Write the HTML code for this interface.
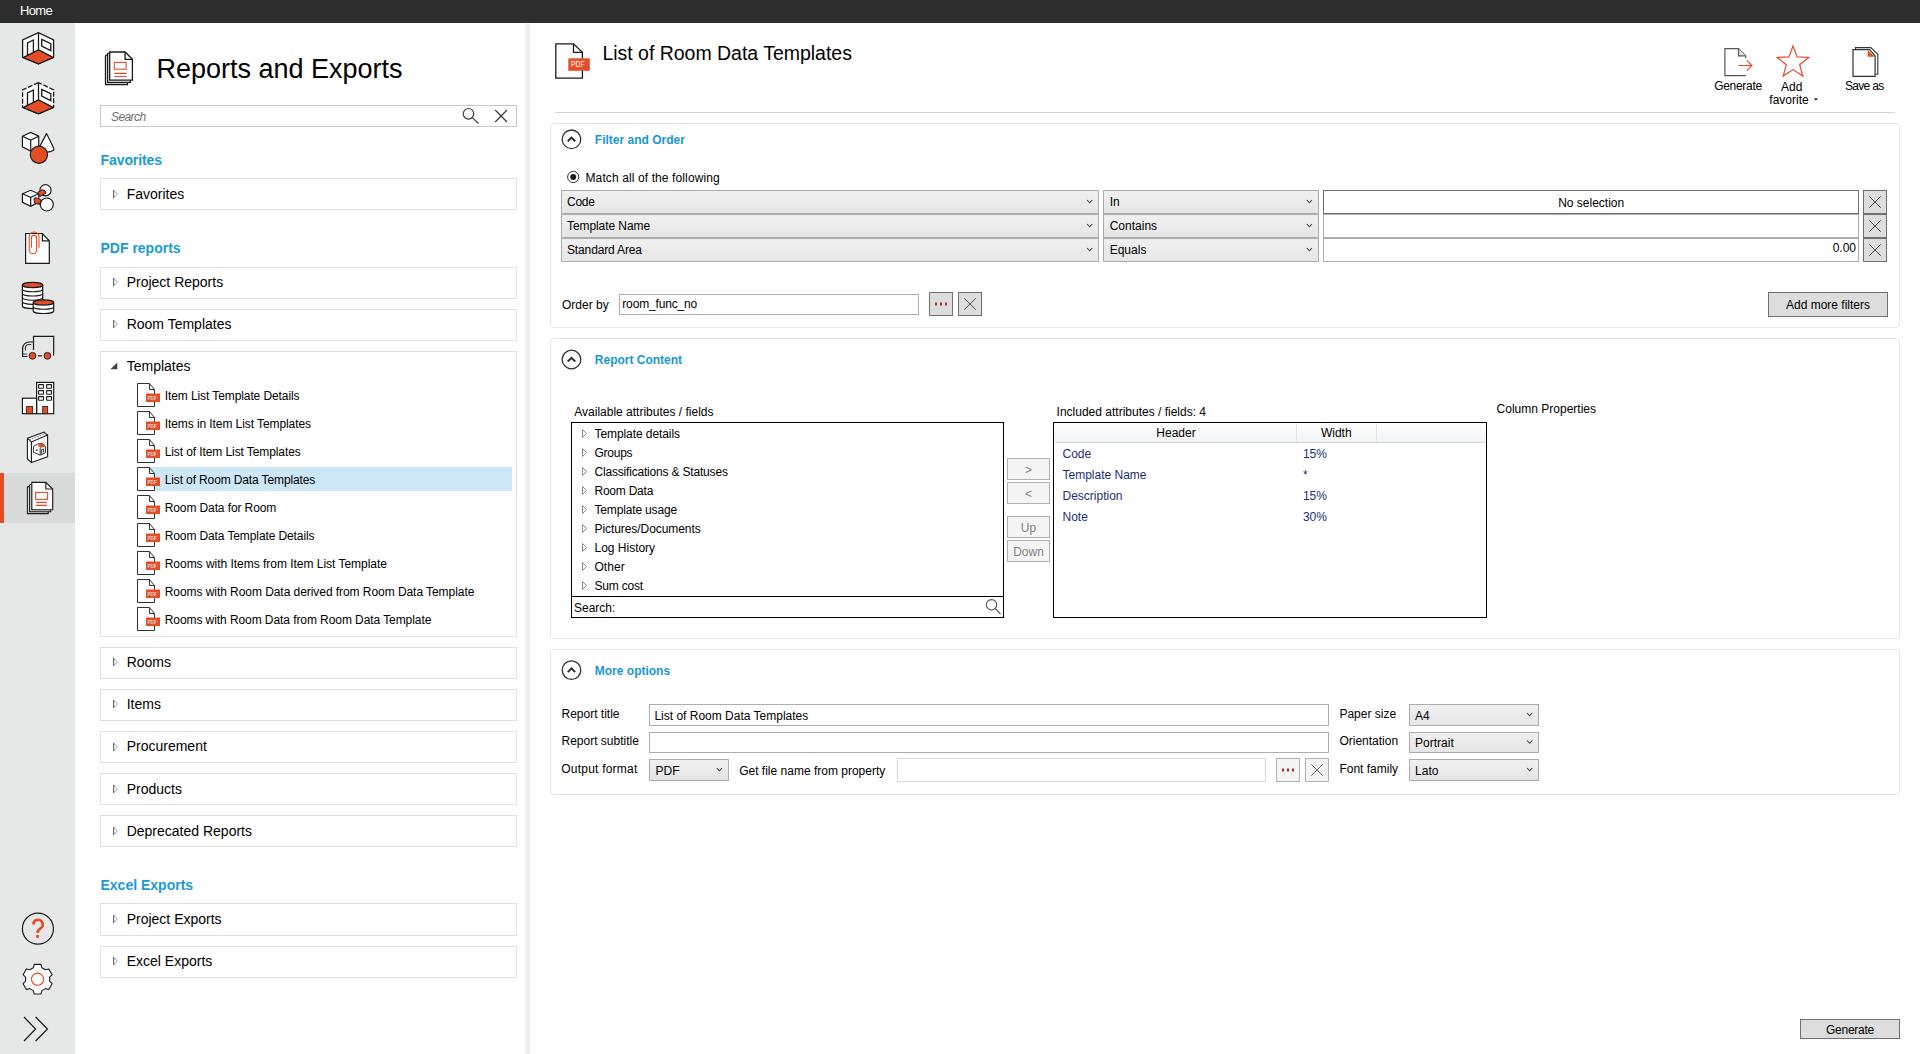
<!DOCTYPE html><html><head><meta charset="utf-8"><style>
html,body{margin:0;padding:0;width:1920px;height:1054px;overflow:hidden;background:#fff;font-family:"Liberation Sans",sans-serif;}
.t{position:absolute;white-space:pre;}
.b{position:absolute;box-sizing:border-box;}
svg{position:absolute;overflow:visible;}
</style></head><body>
<div class="b" style="left:0px;top:0px;width:1920px;height:23px;background:#2d2d2d;"></div>
<div class="t" style="left:20px;top:3.995px;font-size:13px;line-height:13px;color:#fff;font-weight:normal;letter-spacing:-0.670px;">Home</div>
<div class="b" style="left:0px;top:23px;width:75px;height:1031px;background:#e6e7e7;"></div>
<div class="b" style="left:0px;top:473px;width:75px;height:50px;background:#d9dada;"></div>
<div class="b" style="left:0px;top:473px;width:4px;height:50px;background:#e44d26;"></div>
<div class="b" style="left:525px;top:23px;width:5px;height:1031px;background:#f0f0f0;"></div>
<div class="t" style="left:156.5px;top:56.145px;font-size:27px;line-height:27px;color:#000;font-weight:normal;letter-spacing:-0.007px;">Reports and Exports</div>
<div class="b" style="left:100px;top:105px;width:417px;height:22px;background:#fff;border:1px solid #c9c9c9;"></div>
<div class="t" style="left:111px;top:110.842px;font-size:12px;line-height:12px;color:#6e6e6e;font-weight:normal;font-style:italic;letter-spacing:-0.587px;">Search</div>
<svg style="left:0;top:0" width="1920" height="1054"><g fill="none" stroke="#3c3c3c" stroke-width="1.2"><circle cx="468.5" cy="113.8" r="5.3"/><line x1="472.3" y1="117.6" x2="478.5" y2="123.5"/><line x1="495.2" y1="110" x2="507" y2="122"/><line x1="507" y1="110" x2="495.2" y2="122"/></g></svg>
<div class="t" style="left:100.5px;top:153.149px;font-size:14px;line-height:14px;color:#1a9ad6;font-weight:bold;letter-spacing:-0.083px;">Favorites</div>
<div class="t" style="left:100.5px;top:241.149px;font-size:14px;line-height:14px;color:#1a9ad6;font-weight:bold;">PDF reports</div>
<div class="t" style="left:100.5px;top:878.149px;font-size:14px;line-height:14px;color:#1a9ad6;font-weight:bold;">Excel Exports</div>
<div class="b" style="left:100px;top:178px;width:417px;height:32px;background:#fff;border:1px solid #e2e2e2;"></div>
<div class="t" style="left:126.7px;top:187.149px;font-size:14px;line-height:14px;color:#000;font-weight:normal;">Favorites</div>
<svg style="left:0;top:0" width="1920" height="1054"><path d="M113.6 190.3 L117.5 194 L113.6 197.7 Z" fill="#fff" stroke="#a0a0a0" stroke-width="1"/><path d="M113.6 190 V198" stroke="#6a6a6a" stroke-width="1.1"/></svg>
<div class="b" style="left:100px;top:267px;width:417px;height:32px;background:#fff;border:1px solid #e2e2e2;"></div>
<div class="t" style="left:126.7px;top:275.149px;font-size:14px;line-height:14px;color:#000;font-weight:normal;">Project Reports</div>
<svg style="left:0;top:0" width="1920" height="1054"><path d="M113.6 278.3 L117.5 282 L113.6 285.7 Z" fill="#fff" stroke="#a0a0a0" stroke-width="1"/><path d="M113.6 278 V286" stroke="#6a6a6a" stroke-width="1.1"/></svg>
<div class="b" style="left:100px;top:309px;width:417px;height:32px;background:#fff;border:1px solid #e2e2e2;"></div>
<div class="t" style="left:126.7px;top:317.149px;font-size:14px;line-height:14px;color:#000;font-weight:normal;">Room Templates</div>
<svg style="left:0;top:0" width="1920" height="1054"><path d="M113.6 320.3 L117.5 324 L113.6 327.7 Z" fill="#fff" stroke="#a0a0a0" stroke-width="1"/><path d="M113.6 320 V328" stroke="#6a6a6a" stroke-width="1.1"/></svg>
<div class="b" style="left:100px;top:351px;width:417px;height:286px;background:#fff;border:1px solid #e2e2e2;"></div>
<div class="t" style="left:126.7px;top:359.149px;font-size:14px;line-height:14px;color:#000;font-weight:normal;">Templates</div>
<svg style="left:0;top:0" width="1920" height="1054"><path d="M117.3 362.6 L117.3 369.2 L110.4 369.2 Z" fill="#444"/></svg>
<div class="t" style="left:164.7px;top:389.842px;font-size:12px;line-height:12px;color:#000;font-weight:normal;letter-spacing:-0.091px;">Item List Template Details</div>
<svg style="left:0;top:0" width="1920" height="1054"><path d="M137.5 383.5 H149.5 L154.5 389.5 V406.5 H137.5 Z" fill="#fff" stroke="#333" stroke-width="1"/><path d="M149.5 383.5 V389.5 H154.5" fill="none" stroke="#333" stroke-width="1"/><rect x="146" y="393.5" width="14" height="8.5" fill="#e44d26"/><text x="147.4" y="399.8" font-size="5.6" textLength="9.4" lengthAdjust="spacingAndGlyphs" fill="#fff" font-family="Liberation Sans">PDF</text></svg>
<div class="t" style="left:164.7px;top:417.842px;font-size:12px;line-height:12px;color:#000;font-weight:normal;letter-spacing:-0.079px;">Items in Item List Templates</div>
<svg style="left:0;top:0" width="1920" height="1054"><path d="M137.5 411.5 H149.5 L154.5 417.5 V434.5 H137.5 Z" fill="#fff" stroke="#333" stroke-width="1"/><path d="M149.5 411.5 V417.5 H154.5" fill="none" stroke="#333" stroke-width="1"/><rect x="146" y="421.5" width="14" height="8.5" fill="#e44d26"/><text x="147.4" y="427.8" font-size="5.6" textLength="9.4" lengthAdjust="spacingAndGlyphs" fill="#fff" font-family="Liberation Sans">PDF</text></svg>
<div class="t" style="left:164.7px;top:445.842px;font-size:12px;line-height:12px;color:#000;font-weight:normal;letter-spacing:-0.093px;">List of Item List Templates</div>
<svg style="left:0;top:0" width="1920" height="1054"><path d="M137.5 439.5 H149.5 L154.5 445.5 V462.5 H137.5 Z" fill="#fff" stroke="#333" stroke-width="1"/><path d="M149.5 439.5 V445.5 H154.5" fill="none" stroke="#333" stroke-width="1"/><rect x="146" y="449.5" width="14" height="8.5" fill="#e44d26"/><text x="147.4" y="455.8" font-size="5.6" textLength="9.4" lengthAdjust="spacingAndGlyphs" fill="#fff" font-family="Liberation Sans">PDF</text></svg>
<div class="b" style="left:140px;top:467px;width:372px;height:24px;background:#cce7f5;"></div>
<div class="t" style="left:164.7px;top:473.842px;font-size:12px;line-height:12px;color:#000;font-weight:normal;letter-spacing:-0.124px;">List of Room Data Templates</div>
<svg style="left:0;top:0" width="1920" height="1054"><path d="M137.5 467.5 H149.5 L154.5 473.5 V490.5 H137.5 Z" fill="#fff" stroke="#333" stroke-width="1"/><path d="M149.5 467.5 V473.5 H154.5" fill="none" stroke="#333" stroke-width="1"/><rect x="146" y="477.5" width="14" height="8.5" fill="#e44d26"/><text x="147.4" y="483.8" font-size="5.6" textLength="9.4" lengthAdjust="spacingAndGlyphs" fill="#fff" font-family="Liberation Sans">PDF</text></svg>
<div class="t" style="left:164.7px;top:501.842px;font-size:12px;line-height:12px;color:#000;font-weight:normal;letter-spacing:-0.104px;">Room Data for Room</div>
<svg style="left:0;top:0" width="1920" height="1054"><path d="M137.5 495.5 H149.5 L154.5 501.5 V518.5 H137.5 Z" fill="#fff" stroke="#333" stroke-width="1"/><path d="M149.5 495.5 V501.5 H154.5" fill="none" stroke="#333" stroke-width="1"/><rect x="146" y="505.5" width="14" height="8.5" fill="#e44d26"/><text x="147.4" y="511.8" font-size="5.6" textLength="9.4" lengthAdjust="spacingAndGlyphs" fill="#fff" font-family="Liberation Sans">PDF</text></svg>
<div class="t" style="left:164.7px;top:529.842px;font-size:12px;line-height:12px;color:#000;font-weight:normal;letter-spacing:-0.108px;">Room Data Template Details</div>
<svg style="left:0;top:0" width="1920" height="1054"><path d="M137.5 523.5 H149.5 L154.5 529.5 V546.5 H137.5 Z" fill="#fff" stroke="#333" stroke-width="1"/><path d="M149.5 523.5 V529.5 H154.5" fill="none" stroke="#333" stroke-width="1"/><rect x="146" y="533.5" width="14" height="8.5" fill="#e44d26"/><text x="147.4" y="539.8" font-size="5.6" textLength="9.4" lengthAdjust="spacingAndGlyphs" fill="#fff" font-family="Liberation Sans">PDF</text></svg>
<div class="t" style="left:164.7px;top:557.842px;font-size:12px;line-height:12px;color:#000;font-weight:normal;letter-spacing:-0.022px;">Rooms with Items from Item List Template</div>
<svg style="left:0;top:0" width="1920" height="1054"><path d="M137.5 551.5 H149.5 L154.5 557.5 V574.5 H137.5 Z" fill="#fff" stroke="#333" stroke-width="1"/><path d="M149.5 551.5 V557.5 H154.5" fill="none" stroke="#333" stroke-width="1"/><rect x="146" y="561.5" width="14" height="8.5" fill="#e44d26"/><text x="147.4" y="567.8" font-size="5.6" textLength="9.4" lengthAdjust="spacingAndGlyphs" fill="#fff" font-family="Liberation Sans">PDF</text></svg>
<div class="t" style="left:164.7px;top:585.842px;font-size:12px;line-height:12px;color:#000;font-weight:normal;letter-spacing:-0.057px;">Rooms with Room Data derived from Room Data Template</div>
<svg style="left:0;top:0" width="1920" height="1054"><path d="M137.5 579.5 H149.5 L154.5 585.5 V602.5 H137.5 Z" fill="#fff" stroke="#333" stroke-width="1"/><path d="M149.5 579.5 V585.5 H154.5" fill="none" stroke="#333" stroke-width="1"/><rect x="146" y="589.5" width="14" height="8.5" fill="#e44d26"/><text x="147.4" y="595.8" font-size="5.6" textLength="9.4" lengthAdjust="spacingAndGlyphs" fill="#fff" font-family="Liberation Sans">PDF</text></svg>
<div class="t" style="left:164.7px;top:613.842px;font-size:12px;line-height:12px;color:#000;font-weight:normal;letter-spacing:-0.075px;">Rooms with Room Data from Room Data Template</div>
<svg style="left:0;top:0" width="1920" height="1054"><path d="M137.5 607.5 H149.5 L154.5 613.5 V630.5 H137.5 Z" fill="#fff" stroke="#333" stroke-width="1"/><path d="M149.5 607.5 V613.5 H154.5" fill="none" stroke="#333" stroke-width="1"/><rect x="146" y="617.5" width="14" height="8.5" fill="#e44d26"/><text x="147.4" y="623.8" font-size="5.6" textLength="9.4" lengthAdjust="spacingAndGlyphs" fill="#fff" font-family="Liberation Sans">PDF</text></svg>
<div class="b" style="left:100px;top:647px;width:417px;height:32px;background:#fff;border:1px solid #e2e2e2;"></div>
<div class="t" style="left:126.7px;top:655.149px;font-size:14px;line-height:14px;color:#000;font-weight:normal;">Rooms</div>
<svg style="left:0;top:0" width="1920" height="1054"><path d="M113.6 658.3 L117.5 662 L113.6 665.7 Z" fill="#fff" stroke="#a0a0a0" stroke-width="1"/><path d="M113.6 658 V666" stroke="#6a6a6a" stroke-width="1.1"/></svg>
<div class="b" style="left:100px;top:689px;width:417px;height:32px;background:#fff;border:1px solid #e2e2e2;"></div>
<div class="t" style="left:126.7px;top:697.149px;font-size:14px;line-height:14px;color:#000;font-weight:normal;">Items</div>
<svg style="left:0;top:0" width="1920" height="1054"><path d="M113.6 700.3 L117.5 704 L113.6 707.7 Z" fill="#fff" stroke="#a0a0a0" stroke-width="1"/><path d="M113.6 700 V708" stroke="#6a6a6a" stroke-width="1.1"/></svg>
<div class="b" style="left:100px;top:731px;width:417px;height:32px;background:#fff;border:1px solid #e2e2e2;"></div>
<div class="t" style="left:126.7px;top:739.149px;font-size:14px;line-height:14px;color:#000;font-weight:normal;">Procurement</div>
<svg style="left:0;top:0" width="1920" height="1054"><path d="M113.6 743.3 L117.5 747 L113.6 750.7 Z" fill="#fff" stroke="#a0a0a0" stroke-width="1"/><path d="M113.6 743 V751" stroke="#6a6a6a" stroke-width="1.1"/></svg>
<div class="b" style="left:100px;top:773px;width:417px;height:32px;background:#fff;border:1px solid #e2e2e2;"></div>
<div class="t" style="left:126.7px;top:782.149px;font-size:14px;line-height:14px;color:#000;font-weight:normal;">Products</div>
<svg style="left:0;top:0" width="1920" height="1054"><path d="M113.6 785.3 L117.5 789 L113.6 792.7 Z" fill="#fff" stroke="#a0a0a0" stroke-width="1"/><path d="M113.6 785 V793" stroke="#6a6a6a" stroke-width="1.1"/></svg>
<div class="b" style="left:100px;top:815px;width:417px;height:32px;background:#fff;border:1px solid #e2e2e2;"></div>
<div class="t" style="left:126.7px;top:824.149px;font-size:14px;line-height:14px;color:#000;font-weight:normal;">Deprecated Reports</div>
<svg style="left:0;top:0" width="1920" height="1054"><path d="M113.6 827.3 L117.5 831 L113.6 834.7 Z" fill="#fff" stroke="#a0a0a0" stroke-width="1"/><path d="M113.6 827 V835" stroke="#6a6a6a" stroke-width="1.1"/></svg>
<div class="b" style="left:100px;top:903px;width:417px;height:33px;background:#fff;border:1px solid #e2e2e2;"></div>
<div class="t" style="left:126.7px;top:912.149px;font-size:14px;line-height:14px;color:#000;font-weight:normal;">Project Exports</div>
<svg style="left:0;top:0" width="1920" height="1054"><path d="M113.6 915.3 L117.5 919 L113.6 922.7 Z" fill="#fff" stroke="#a0a0a0" stroke-width="1"/><path d="M113.6 915 V923" stroke="#6a6a6a" stroke-width="1.1"/></svg>
<div class="b" style="left:100px;top:946px;width:417px;height:32px;background:#fff;border:1px solid #e2e2e2;"></div>
<div class="t" style="left:126.7px;top:954.149px;font-size:14px;line-height:14px;color:#000;font-weight:normal;">Excel Exports</div>
<svg style="left:0;top:0" width="1920" height="1054"><path d="M113.6 957.3 L117.5 961 L113.6 964.7 Z" fill="#fff" stroke="#a0a0a0" stroke-width="1"/><path d="M113.6 957 V965" stroke="#6a6a6a" stroke-width="1.1"/></svg>
<div class="t" style="left:602.4px;top:44.493px;font-size:19.5px;line-height:19.5px;color:#000;font-weight:normal;letter-spacing:-0.019px;">List of Room Data Templates</div>
<div class="b" style="left:555px;top:112px;width:1340px;height:1px;background:#d5d5d5;"></div>
<div class="b" style="left:550px;top:123px;width:1350px;height:205px;border:1px solid #e3e6e6;border-radius:4px;"></div>
<svg style="left:0;top:0" width="1920" height="1054"><circle cx="571.5" cy="139.3" r="9.3" fill="none" stroke="#333" stroke-width="1.3"/><path d="M567.8 141.3 L571.5 137.60000000000002 L575.2 141.3" fill="none" stroke="#2a2a2a" stroke-width="2"/></svg>
<div class="t" style="left:594.8px;top:133.842px;font-size:12px;line-height:12px;color:#1a96d6;font-weight:bold;">Filter and Order</div>
<div class="b" style="left:550px;top:338px;width:1350px;height:301px;border:1px solid #e3e6e6;border-radius:4px;"></div>
<svg style="left:0;top:0" width="1920" height="1054"><circle cx="571.5" cy="359.5" r="9.3" fill="none" stroke="#333" stroke-width="1.3"/><path d="M567.8 361.5 L571.5 357.8 L575.2 361.5" fill="none" stroke="#2a2a2a" stroke-width="2"/></svg>
<div class="t" style="left:594.8px;top:353.842px;font-size:12px;line-height:12px;color:#1a96d6;font-weight:bold;">Report Content</div>
<div class="b" style="left:550px;top:649px;width:1350px;height:146px;border:1px solid #e3e6e6;border-radius:4px;"></div>
<svg style="left:0;top:0" width="1920" height="1054"><circle cx="571.5" cy="670.1" r="9.3" fill="none" stroke="#333" stroke-width="1.3"/><path d="M567.8 672.1 L571.5 668.4 L575.2 672.1" fill="none" stroke="#2a2a2a" stroke-width="2"/></svg>
<div class="t" style="left:594.8px;top:664.842px;font-size:12px;line-height:12px;color:#1a96d6;font-weight:bold;">More options</div>
<svg style="left:0;top:0" width="1920" height="1054"><circle cx="573.2" cy="177" r="5.6" fill="#fff" stroke="#333" stroke-width="1"/><circle cx="573.2" cy="177" r="3" fill="#1a1a1a"/></svg>
<div class="t" style="left:585.5px;top:171.842px;font-size:12px;line-height:12px;color:#000;font-weight:normal;letter-spacing:0.111px;">Match all of the following</div>
<div class="b" style="left:561px;top:190px;width:538px;height:24px;background:linear-gradient(#f0f0f0,#e5e5e5);border:1px solid #acacac;"></div>
<div class="t" style="left:567px;top:195.842px;font-size:12px;line-height:12px;color:#000;font-weight:normal;letter-spacing:-0.247px;">Code</div>
<svg style="left:0;top:0" width="1920" height="1054"><path d="M1087 200.0 L1089.6 202.8 L1092.2 200.0" fill="none" stroke="#444" stroke-width="1.1"/></svg>
<div class="b" style="left:1103px;top:190px;width:216px;height:24px;background:linear-gradient(#f0f0f0,#e5e5e5);border:1px solid #acacac;"></div>
<div class="t" style="left:1109.7px;top:195.842px;font-size:12px;line-height:12px;color:#000;font-weight:normal;">In</div>
<svg style="left:0;top:0" width="1920" height="1054"><path d="M1306.8 200.0 L1309.3999999999999 202.8 L1312.0 200.0" fill="none" stroke="#444" stroke-width="1.1"/></svg>
<div class="b" style="left:1323px;top:190px;width:536px;height:24px;background:#fff;border:1px solid #707070;"></div>
<div class="t" style="left:1291.2px;width:600px;text-align:center;top:196.842px;font-size:12px;line-height:12px;color:#000;font-weight:normal;">No selection</div>
<div class="b" style="left:1863px;top:190px;width:24px;height:24px;background:#dddddd;border:1px solid #707070;"></div>
<svg style="left:0;top:0" width="1920" height="1054"><path d="M1869.2 196.2 L1880.8 207.8 M1880.8 196.2 L1869.2 207.8" stroke="#333" stroke-width="0.85"/></svg>
<div class="b" style="left:561px;top:214px;width:538px;height:24px;background:linear-gradient(#f0f0f0,#e5e5e5);border:1px solid #acacac;"></div>
<div class="t" style="left:567px;top:219.842px;font-size:12px;line-height:12px;color:#000;font-weight:normal;letter-spacing:-0.080px;">Template Name</div>
<svg style="left:0;top:0" width="1920" height="1054"><path d="M1087 224.0 L1089.6 226.8 L1092.2 224.0" fill="none" stroke="#444" stroke-width="1.1"/></svg>
<div class="b" style="left:1103px;top:214px;width:216px;height:24px;background:linear-gradient(#f0f0f0,#e5e5e5);border:1px solid #acacac;"></div>
<div class="t" style="left:1109.7px;top:219.842px;font-size:12px;line-height:12px;color:#000;font-weight:normal;">Contains</div>
<svg style="left:0;top:0" width="1920" height="1054"><path d="M1306.8 224.0 L1309.3999999999999 226.8 L1312.0 224.0" fill="none" stroke="#444" stroke-width="1.1"/></svg>
<div class="b" style="left:1323px;top:214px;width:536px;height:24px;background:#fff;border:1px solid #abadb3;"></div>
<div class="b" style="left:1863px;top:214px;width:24px;height:24px;background:#dddddd;border:1px solid #707070;"></div>
<svg style="left:0;top:0" width="1920" height="1054"><path d="M1869.2 220.2 L1880.8 231.8 M1880.8 220.2 L1869.2 231.8" stroke="#333" stroke-width="0.85"/></svg>
<div class="b" style="left:561px;top:238px;width:538px;height:24px;background:linear-gradient(#f0f0f0,#e5e5e5);border:1px solid #acacac;"></div>
<div class="t" style="left:567px;top:243.842px;font-size:12px;line-height:12px;color:#000;font-weight:normal;letter-spacing:-0.140px;">Standard Area</div>
<svg style="left:0;top:0" width="1920" height="1054"><path d="M1087 248.0 L1089.6 250.8 L1092.2 248.0" fill="none" stroke="#444" stroke-width="1.1"/></svg>
<div class="b" style="left:1103px;top:238px;width:216px;height:24px;background:linear-gradient(#f0f0f0,#e5e5e5);border:1px solid #acacac;"></div>
<div class="t" style="left:1109.7px;top:243.842px;font-size:12px;line-height:12px;color:#000;font-weight:normal;">Equals</div>
<svg style="left:0;top:0" width="1920" height="1054"><path d="M1306.8 248.0 L1309.3999999999999 250.8 L1312.0 248.0" fill="none" stroke="#444" stroke-width="1.1"/></svg>
<div class="b" style="left:1323px;top:238px;width:536px;height:24px;background:#fff;border:1px solid #abadb3;"></div>
<div class="t" style="right:64px;top:241.842px;font-size:12px;line-height:12px;color:#000;font-weight:normal;">0.00</div>
<div class="b" style="left:1863px;top:238px;width:24px;height:24px;background:#dddddd;border:1px solid #707070;"></div>
<svg style="left:0;top:0" width="1920" height="1054"><path d="M1869.2 244.2 L1880.8 255.8 M1880.8 244.2 L1869.2 255.8" stroke="#333" stroke-width="0.85"/></svg>
<div class="t" style="left:562px;top:298.842px;font-size:12px;line-height:12px;color:#000;font-weight:normal;">Order by</div>
<div class="b" style="left:619px;top:294px;width:300px;height:21px;background:#fff;border:1px solid #abadb3;"></div>
<div class="t" style="left:622.3px;top:297.842px;font-size:12px;line-height:12px;color:#000;font-weight:normal;letter-spacing:-0.168px;">room_func_no</div>
<div class="b" style="left:929px;top:292px;width:24px;height:24px;background:#dddddd;border:1px solid #707070;"></div>
<svg style="left:0;top:0" width="1920" height="1054"><g fill="#a5321c"><rect x="935.0" y="302.5" width="2" height="3"/><rect x="940.0" y="302.5" width="2" height="3"/><rect x="945.0" y="302.5" width="2" height="3"/></g></svg>
<div class="b" style="left:958px;top:292px;width:24px;height:24px;background:#dddddd;border:1px solid #707070;"></div>
<svg style="left:0;top:0" width="1920" height="1054"><path d="M964.2 298.2 L975.8 309.8 M975.8 298.2 L964.2 309.8" stroke="#333" stroke-width="0.85"/></svg>
<div class="b" style="left:1768px;top:292px;width:120px;height:25px;background:#dddddd;border:1px solid #707070;"></div>
<div class="t" style="left:1528px;width:600px;text-align:center;top:298.842px;font-size:12px;line-height:12px;color:#000;font-weight:normal;">Add more filters</div>
<div class="t" style="left:574.3px;top:405.842px;font-size:12px;line-height:12px;color:#000;font-weight:normal;">Available attributes / fields</div>
<div class="b" style="left:571px;top:422px;width:433px;height:196px;background:#fff;border:1px solid #000;"></div>
<div class="b" style="left:571px;top:596px;width:433px;height:1px;background:#000;"></div>
<div class="t" style="left:594.5px;top:427.842px;font-size:12px;line-height:12px;color:#000;font-weight:normal;letter-spacing:-0.082px;">Template details</div>
<div class="t" style="left:594.5px;top:446.842px;font-size:12px;line-height:12px;color:#000;font-weight:normal;letter-spacing:-0.259px;">Groups</div>
<div class="t" style="left:594.5px;top:465.842px;font-size:12px;line-height:12px;color:#000;font-weight:normal;letter-spacing:-0.187px;">Classifications &amp; Statuses</div>
<div class="t" style="left:594.5px;top:484.842px;font-size:12px;line-height:12px;color:#000;font-weight:normal;letter-spacing:-0.233px;">Room Data</div>
<div class="t" style="left:594.5px;top:503.842px;font-size:12px;line-height:12px;color:#000;font-weight:normal;letter-spacing:-0.159px;">Template usage</div>
<div class="t" style="left:594.5px;top:522.842px;font-size:12px;line-height:12px;color:#000;font-weight:normal;letter-spacing:-0.071px;">Pictures/Documents</div>
<div class="t" style="left:594.5px;top:541.842px;font-size:12px;line-height:12px;color:#000;font-weight:normal;letter-spacing:-0.008px;">Log History</div>
<div class="t" style="left:594.5px;top:560.842px;font-size:12px;line-height:12px;color:#000;font-weight:normal;letter-spacing:0.038px;">Other</div>
<div class="t" style="left:594.5px;top:579.842px;font-size:12px;line-height:12px;color:#000;font-weight:normal;letter-spacing:-0.202px;">Sum cost</div>
<svg style="left:0;top:0" width="1920" height="1054"><path d="M582.5 429.5 L586.5 433.5 L582.5 437.5 Z" fill="#fff" stroke="#8a8a8a" stroke-width="1"/><path d="M582.5 448.5 L586.5 452.5 L582.5 456.5 Z" fill="#fff" stroke="#8a8a8a" stroke-width="1"/><path d="M582.5 467.5 L586.5 471.5 L582.5 475.5 Z" fill="#fff" stroke="#8a8a8a" stroke-width="1"/><path d="M582.5 486.5 L586.5 490.5 L582.5 494.5 Z" fill="#fff" stroke="#8a8a8a" stroke-width="1"/><path d="M582.5 505.5 L586.5 509.5 L582.5 513.5 Z" fill="#fff" stroke="#8a8a8a" stroke-width="1"/><path d="M582.5 524.5 L586.5 528.5 L582.5 532.5 Z" fill="#fff" stroke="#8a8a8a" stroke-width="1"/><path d="M582.5 543.5 L586.5 547.5 L582.5 551.5 Z" fill="#fff" stroke="#8a8a8a" stroke-width="1"/><path d="M582.5 562.5 L586.5 566.5 L582.5 570.5 Z" fill="#fff" stroke="#8a8a8a" stroke-width="1"/><path d="M582.5 581.5 L586.5 585.5 L582.5 589.5 Z" fill="#fff" stroke="#8a8a8a" stroke-width="1"/></svg>
<div class="t" style="left:574px;top:601.842px;font-size:12px;line-height:12px;color:#000;font-weight:normal;">Search:</div>
<svg style="left:0;top:0" width="1920" height="1054"><g fill="none" stroke="#555" stroke-width="1.1"><circle cx="991.5" cy="604.8" r="5.2"/><line x1="995.2" y1="608.5" x2="1000.5" y2="614"/></g></svg>
<div class="b" style="left:1007px;top:458px;width:43px;height:22px;background:#f4f4f4;border:1px solid #adb2b5;"></div>
<div class="t" style="left:728.5px;width:600px;text-align:center;top:463.842px;font-size:12px;line-height:12px;color:#838383;font-weight:normal;">&gt;</div>
<div class="b" style="left:1007px;top:482px;width:43px;height:22px;background:#f4f4f4;border:1px solid #adb2b5;"></div>
<div class="t" style="left:728.5px;width:600px;text-align:center;top:487.842px;font-size:12px;line-height:12px;color:#838383;font-weight:normal;">&lt;</div>
<div class="b" style="left:1007px;top:516px;width:43px;height:22px;background:#f4f4f4;border:1px solid #adb2b5;"></div>
<div class="t" style="left:728.5px;width:600px;text-align:center;top:521.842px;font-size:12px;line-height:12px;color:#838383;font-weight:normal;">Up</div>
<div class="b" style="left:1007px;top:540px;width:43px;height:22px;background:#f4f4f4;border:1px solid #adb2b5;"></div>
<div class="t" style="left:728.5px;width:600px;text-align:center;top:545.842px;font-size:12px;line-height:12px;color:#838383;font-weight:normal;">Down</div>
<div class="t" style="left:1056.6px;top:405.842px;font-size:12px;line-height:12px;color:#000;font-weight:normal;">Included attributes / fields: 4</div>
<div class="b" style="left:1053px;top:422px;width:434px;height:196px;background:#fff;border:1px solid #000;"></div>
<div class="b" style="left:1054px;top:423px;width:432px;height:19px;background:linear-gradient(#ffffff,#f3f4f6);"></div>
<div class="b" style="left:1055px;top:442px;width:430px;height:1px;background:#d5d5d5;"></div>
<div class="b" style="left:1296px;top:424px;width:1px;height:18px;background:#e5e5e5;"></div>
<div class="b" style="left:1376px;top:424px;width:1px;height:18px;background:#e5e5e5;"></div>
<div class="t" style="left:876px;width:600px;text-align:center;top:426.842px;font-size:12px;line-height:12px;color:#000;font-weight:normal;">Header</div>
<div class="t" style="left:1036.3px;width:600px;text-align:center;top:426.842px;font-size:12px;line-height:12px;color:#000;font-weight:normal;">Width</div>
<div class="t" style="left:1062.5px;top:447.842px;font-size:12px;line-height:12px;color:#1b2c80;font-weight:normal;">Code</div>
<div class="t" style="left:1302.9px;top:447.842px;font-size:12px;line-height:12px;color:#1b2c80;font-weight:normal;">15%</div>
<div class="t" style="left:1062.5px;top:468.842px;font-size:12px;line-height:12px;color:#1b2c80;font-weight:normal;">Template Name</div>
<div class="t" style="left:1302.9px;top:468.842px;font-size:12px;line-height:12px;color:#1b2c80;font-weight:normal;">*</div>
<div class="t" style="left:1062.5px;top:489.842px;font-size:12px;line-height:12px;color:#1b2c80;font-weight:normal;">Description</div>
<div class="t" style="left:1302.9px;top:489.842px;font-size:12px;line-height:12px;color:#1b2c80;font-weight:normal;">15%</div>
<div class="t" style="left:1062.5px;top:510.842px;font-size:12px;line-height:12px;color:#1b2c80;font-weight:normal;">Note</div>
<div class="t" style="left:1302.9px;top:510.842px;font-size:12px;line-height:12px;color:#1b2c80;font-weight:normal;">30%</div>
<div class="t" style="left:1496.6px;top:402.842px;font-size:12px;line-height:12px;color:#000;font-weight:normal;">Column Properties</div>
<div class="t" style="left:561.5px;top:707.842px;font-size:12px;line-height:12px;color:#000;font-weight:normal;">Report title</div>
<div class="t" style="left:561.5px;top:734.842px;font-size:12px;line-height:12px;color:#000;font-weight:normal;">Report subtitle</div>
<div class="t" style="left:561.3px;top:762.842px;font-size:12px;line-height:12px;color:#000;font-weight:normal;letter-spacing:0.218px;">Output format</div>
<div class="b" style="left:649px;top:704px;width:680px;height:22px;background:#fff;border:1px solid #abadb3;"></div>
<div class="t" style="left:654.4px;top:709.842px;font-size:12px;line-height:12px;color:#000;font-weight:normal;">List of Room Data Templates</div>
<div class="b" style="left:649px;top:732px;width:680px;height:21px;background:#fff;border:1px solid #abadb3;"></div>
<div class="b" style="left:649px;top:759px;width:80px;height:22px;background:linear-gradient(#f0f0f0,#e5e5e5);border:1px solid #acacac;"></div>
<div class="t" style="left:655.5px;top:764.842px;font-size:12px;line-height:12px;color:#000;font-weight:normal;">PDF</div>
<svg style="left:0;top:0" width="1920" height="1054"><path d="M716.8 768.0 L719.4 770.8 L722.0 768.0" fill="none" stroke="#444" stroke-width="1.1"/></svg>
<div class="t" style="left:739.2px;top:764.842px;font-size:12px;line-height:12px;color:#000;font-weight:normal;">Get file name from property</div>
<div class="b" style="left:897px;top:758px;width:369px;height:24px;background:#fff;border:1px solid #d9d9d9;"></div>
<div class="b" style="left:1276px;top:758px;width:24px;height:24px;background:#f4f4f4;border:1px solid #adb2b5;"></div>
<svg style="left:0;top:0" width="1920" height="1054"><g fill="#a5321c"><rect x="1282.0" y="768.5" width="2" height="3"/><rect x="1287.0" y="768.5" width="2" height="3"/><rect x="1292.0" y="768.5" width="2" height="3"/></g></svg>
<div class="b" style="left:1305px;top:758px;width:24px;height:24px;background:#f4f4f4;border:1px solid #adb2b5;"></div>
<svg style="left:0;top:0" width="1920" height="1054"><path d="M1311.2 764.2 L1322.8 775.8 M1322.8 764.2 L1311.2 775.8" stroke="#555" stroke-width="0.85"/></svg>
<div class="t" style="left:1339.4px;top:707.842px;font-size:12px;line-height:12px;color:#000;font-weight:normal;">Paper size</div>
<div class="t" style="left:1339.4px;top:734.842px;font-size:12px;line-height:12px;color:#000;font-weight:normal;">Orientation</div>
<div class="t" style="left:1339.4px;top:762.842px;font-size:12px;line-height:12px;color:#000;font-weight:normal;">Font family</div>
<div class="b" style="left:1409px;top:704px;width:130px;height:22px;background:linear-gradient(#f0f0f0,#e5e5e5);border:1px solid #acacac;"></div>
<div class="t" style="left:1415.1px;top:709.842px;font-size:12px;line-height:12px;color:#000;font-weight:normal;">A4</div>
<svg style="left:0;top:0" width="1920" height="1054"><path d="M1527 713.0 L1529.6 715.8 L1532.2 713.0" fill="none" stroke="#444" stroke-width="1.1"/></svg>
<div class="b" style="left:1409px;top:732px;width:130px;height:21px;background:linear-gradient(#f0f0f0,#e5e5e5);border:1px solid #acacac;"></div>
<div class="t" style="left:1415.1px;top:736.842px;font-size:12px;line-height:12px;color:#000;font-weight:normal;">Portrait</div>
<svg style="left:0;top:0" width="1920" height="1054"><path d="M1527 740.5 L1529.6 743.3 L1532.2 740.5" fill="none" stroke="#444" stroke-width="1.1"/></svg>
<div class="b" style="left:1409px;top:759px;width:130px;height:22px;background:linear-gradient(#f0f0f0,#e5e5e5);border:1px solid #acacac;"></div>
<div class="t" style="left:1415.1px;top:764.842px;font-size:12px;line-height:12px;color:#000;font-weight:normal;">Lato</div>
<svg style="left:0;top:0" width="1920" height="1054"><path d="M1527 768.0 L1529.6 770.8 L1532.2 768.0" fill="none" stroke="#444" stroke-width="1.1"/></svg>
<div class="b" style="left:1800px;top:1019px;width:100px;height:20px;background:#dddddd;border:1px solid #707070;"></div>
<div class="t" style="left:1550px;width:600px;text-align:center;top:1023.842px;font-size:12px;line-height:12px;color:#000;font-weight:normal;letter-spacing:-0.254px;">Generate</div>
<div class="t" style="left:1438px;width:600px;text-align:center;top:79.842px;font-size:12px;line-height:12px;color:#000;font-weight:normal;letter-spacing:-0.292px;">Generate</div>
<div class="t" style="left:1491.8px;width:600px;text-align:center;top:80.842px;font-size:12px;line-height:12px;color:#000;font-weight:normal;">Add</div>
<div class="t" style="left:1489px;width:600px;text-align:center;top:93.842px;font-size:12px;line-height:12px;color:#000;font-weight:normal;">favorite</div>
<div class="t" style="left:1564.3px;width:600px;text-align:center;top:79.842px;font-size:12px;line-height:12px;color:#000;font-weight:normal;letter-spacing:-0.680px;">Save as</div>
<svg style="left:0;top:0" width="1920" height="1054"><g transform="translate(0,0)"><path d="M38.5 32.6 L22.6 39.8 L22.6 57.3 L38.5 63.8 L53.6 57.3 L53.6 39.8 Z" fill="#fff" stroke="#1a1a1a" stroke-width="1.3"/><path d="M38.5 49.8 L23.5 57.3 L38.5 63.3 L53 57.3 Z" fill="#e44d26"/><path d="M38.5 32.6 V49.8" stroke="#1a1a1a" stroke-width="1.3"/><path d="M27.5 55.5 V42.8 L33.4 40 V52.6" fill="none" stroke="#1a1a1a" stroke-width="1.3"/><path d="M41.7 39.4 L50.8 43.6 V50.6 L41.7 46.2 Z" fill="none" stroke="#1a1a1a" stroke-width="1.3"/><path d="M38.5 49.8 L23.5 57.3 M38.5 49.8 L53 57.3 M22.6 57.3 L38.5 63.8 L53.6 57.3" fill="none" stroke="#1a1a1a" stroke-width="1.3"/></g><g transform="translate(0,50)"><path d="M38.5 32.6 L22.6 39.8 L22.6 57.3 L38.5 63.8 L53.6 57.3 L53.6 39.8 Z" fill="#fff" stroke="#1a1a1a" stroke-width="1.3" stroke-dasharray="5 1.6"/><path d="M38.5 49.8 L23.5 57.3 L38.5 63.3 L53 57.3 Z" fill="#e44d26"/><path d="M38.5 32.6 V49.8" stroke="#1a1a1a" stroke-width="1.3"/><path d="M27.5 55.5 V42.8 L33.4 40 V52.6" fill="none" stroke="#1a1a1a" stroke-width="1.3"/><path d="M41.7 39.4 L50.8 43.6 V50.6 L41.7 46.2 Z" fill="none" stroke="#1a1a1a" stroke-width="1.3"/><path d="M38.5 49.8 L23.5 57.3 M38.5 49.8 L53 57.3 M22.6 57.3 L38.5 63.8 L53.6 57.3" fill="none" stroke="#1a1a1a" stroke-width="1.3"/></g><path d="M22.4 136.2 L30.7 132.4 L38.7 136.2 L38.7 146.5 L30.7 151 L22.4 146.8 Z" fill="#fff" stroke="#1a1a1a" stroke-width="1.2"/><path d="M22.4 136.2 L30.7 140 L38.7 136.2 M30.7 140 V151" fill="none" stroke="#1a1a1a" stroke-width="1.2"/><path d="M46.5 133.6 L38.5 149 Q46 154.5 53.6 150.2 Q54.3 149.2 53.8 148.3 Z" fill="#fff" stroke="#1a1a1a" stroke-width="1.2" stroke-linejoin="round"/><circle cx="38.9" cy="154.7" r="8.6" fill="#e44d26" stroke="#1a1a1a" stroke-width="1.2"/><path d="M22.4 193.8 L30.7 190.3 L38.7 193.8 L38.7 202.3 L30.7 206.3 L22.4 202.3 Z" fill="#fff" stroke="#1a1a1a" stroke-width="1.2"/><path d="M22.4 193.8 L30.7 197.3 L38.7 193.8 M30.7 197.3 V206.3" fill="none" stroke="#1a1a1a" stroke-width="1.2"/><circle cx="45.5" cy="190.3" r="5.6" fill="#fff" stroke="#1a1a1a" stroke-width="1.2"/><circle cx="46.8" cy="204.5" r="6.5" fill="#fff" stroke="#1a1a1a" stroke-width="1.2"/><path d="M37.9 192.5 L42.2 189.6 L45.4 191.2 L45.9 193.2 L39.8 196.6 Z" fill="#e44d26" stroke="#1a1a1a" stroke-width="1" stroke-linejoin="round"/><path d="M33.9 198.6 L35.9 197.6 L41.2 200 L39.6 204.4 L34.6 203 Z" fill="#e44d26" stroke="#1a1a1a" stroke-width="1" stroke-linejoin="round"/><path d="M25.6 233.5 H42.4 L49.3 240.8 V263.3 H25.6 Z" fill="#fff" stroke="#1a1a1a" stroke-width="1.2"/><path d="M42.4 233.5 V240.8 H49.3" fill="none" stroke="#1a1a1a" stroke-width="1.2"/><path d="M31.4 247.2 V238 A2.6 2.6 0 0 1 36.6 238 V250.1 A3.7 3.7 0 0 1 29.2 250.1 V236.9 A4.9 4.9 0 0 1 39 236.9 V247.2" fill="none" stroke="#e44d26" stroke-width="1.1" stroke-linecap="round"/><path d="M22.4 285 V306.0 A10.150000000000002 2.6 0 0 0 42.7 306.0 V285" fill="#fff" stroke="#1a1a1a" stroke-width="1.2"/><path d="M22.4 289.2 A10.150000000000002 2.6 0 0 0 42.7 289.2" fill="none" stroke="#1a1a1a" stroke-width="1.1"/><path d="M22.4 293.4 A10.150000000000002 2.6 0 0 0 42.7 293.4" fill="none" stroke="#1a1a1a" stroke-width="1.1"/><path d="M22.4 297.6 A10.150000000000002 2.6 0 0 0 42.7 297.6" fill="none" stroke="#1a1a1a" stroke-width="1.1"/><path d="M22.4 301.8 A10.150000000000002 2.6 0 0 0 42.7 301.8" fill="none" stroke="#1a1a1a" stroke-width="1.1"/><ellipse cx="32.55" cy="285" rx="10.150000000000002" ry="2.6" fill="#e44d26" stroke="#1a1a1a" stroke-width="1.2"/><path d="M33.2 302.5 V310.9 A10.25 2.6 0 0 0 53.7 310.9 V302.5" fill="#fff" stroke="#1a1a1a" stroke-width="1.2"/><path d="M33.2 306.7 A10.25 2.6 0 0 0 53.7 306.7" fill="none" stroke="#1a1a1a" stroke-width="1.1"/><ellipse cx="43.45" cy="302.5" rx="10.25" ry="2.6" fill="#e44d26" stroke="#1a1a1a" stroke-width="1.2"/><path d="M33.5 350 V336.4 H53.7 V355.4" fill="none" stroke="#1a1a1a" stroke-width="1.2"/><path d="M33 342 H29 A6.5 6.5 0 0 0 22.6 348.5 V356.5 H27.5" fill="none" stroke="#1a1a1a" stroke-width="1.2"/><path d="M30.8 344.5 H28.8 A3.3 3.3 0 0 0 25.4 347.8 V350" fill="none" stroke="#333" stroke-width="1.1" stroke-linecap="round"/><path d="M23 354.1 H27.3" stroke="#444" stroke-width="1"/><path d="M38 355.8 H42" stroke="#1a1a1a" stroke-width="1.2"/><circle cx="32.5" cy="355.8" r="3.4" fill="#e44d26" stroke="#1a1a1a" stroke-width="0.9"/><circle cx="47.4" cy="355.8" r="3.4" fill="#e44d26" stroke="#1a1a1a" stroke-width="0.9"/><rect x="36.6" y="382.4" width="17.1" height="31.3" fill="#fff" stroke="#1a1a1a" stroke-width="1.2"/><rect x="22.4" y="398.2" width="14.2" height="15.5" fill="#fff" stroke="#1a1a1a" stroke-width="1.2"/><rect x="38.6" y="384.6" width="4.9" height="3.6" rx="0.5" fill="none" stroke="#1a1a1a" stroke-width="1.1"/><rect x="46.6" y="384.6" width="4.9" height="3.6" rx="0.5" fill="none" stroke="#1a1a1a" stroke-width="1.1"/><rect x="38.6" y="390.6" width="4.9" height="3.6" rx="0.5" fill="none" stroke="#1a1a1a" stroke-width="1.1"/><rect x="46.6" y="390.6" width="4.9" height="3.6" rx="0.5" fill="none" stroke="#1a1a1a" stroke-width="1.1"/><rect x="38.6" y="396.6" width="4.9" height="3.6" rx="0.5" fill="none" stroke="#1a1a1a" stroke-width="1.1"/><rect x="46.6" y="396.6" width="4.9" height="3.6" rx="0.5" fill="none" stroke="#1a1a1a" stroke-width="1.1"/><rect x="26.6" y="406.4" width="6" height="7.3" fill="#e44d26" stroke="#1a1a1a" stroke-width="0.8"/><rect x="42.7" y="406.4" width="5" height="7.3" fill="#e44d26" stroke="#1a1a1a" stroke-width="0.8"/><path d="M27.4 438.3 L44.3 432 L45.2 433.6 L47.6 435 V456.8 L31.6 462.6 L27.4 459 Z" fill="#fff" stroke="#1a1a1a" stroke-width="1.1" stroke-linejoin="round"/><path d="M27.4 438.3 L31.4 441.9 L47.6 435 M31.4 441.9 V462.6" fill="none" stroke="#1a1a1a" stroke-width="1.1"/><path d="M29.2 439.9 L45.5 433.4" fill="none" stroke="#555" stroke-width="0.9" stroke-dasharray="1.6 1.2"/><path d="M33.6 446.4 L37.3 444.2 L42.4 443.2 L45.5 446.6 V452.8 L40 455.2 L33.6 452.3 Z" fill="#fff" stroke="#333" stroke-width="1"/><path d="M37.6 444.6 L42.3 443.6 L45 446.6 L40.2 448 Z" fill="#e44d26"/><path d="M40.2 448 V455 M41.7 453.8 V449.6 L43.6 449 V452.6" fill="none" stroke="#333" stroke-width="1"/><circle cx="36.8" cy="450.1" r="0.9" fill="#222"/><path d="M27.4 486.6 H29.4 M27.4 486.6 V513.6 H48.2 V511.8" fill="none" stroke="#1a1a1a" stroke-width="1.05"/><path d="M29.6 484.5 H31.6 M29.6 484.5 V511.7 H50.6 V509.8" fill="none" stroke="#1a1a1a" stroke-width="1.05"/><path d="M31.8 482.4 H45.8 L52.7 489 V509.7 H31.8 Z" fill="#fff" stroke="#1a1a1a" stroke-width="1.15"/><path d="M45.8 482.4 V489 H52.7" fill="none" stroke="#1a1a1a" stroke-width="1.15"/><rect x="35.6" y="492.4" width="12" height="7" fill="none" stroke="#e44d26" stroke-width="1.1"/><path d="M36 502.4 H47 M36 505.4 H47" stroke="#e44d26" stroke-width="1.1"/><circle cx="37.9" cy="928.7" r="15.5" fill="none" stroke="#1a1a1a" stroke-width="1.2"/><path d="M33.5 924.5 A4.6 4.6 0 1 1 40.5 928.3 Q37.6 930 37.6 933" fill="none" stroke="#e44d26" stroke-width="2.6"/><rect x="36.2" y="935" width="2.8" height="2.8" fill="#e44d26"/><path d="M33.30 967.78 L34.28 964.37 L40.92 964.37 L41.90 967.78 L45.34 969.77 L48.79 968.91 L52.10 974.66 L49.64 977.21 L49.64 981.19 L52.10 983.74 L48.79 989.49 L45.34 988.63 L41.90 990.62 L40.92 994.03 L34.28 994.03 L33.30 990.62 L29.86 988.63 L26.41 989.49 L23.10 983.74 L25.56 981.19 L25.56 977.21 L23.10 974.66 L26.41 968.91 L29.86 969.77 Z" fill="#fff" stroke="#1a1a1a" stroke-width="1.1" stroke-linejoin="round"/><circle cx="37.6" cy="979.2" r="6.1" fill="#fff" stroke="#e44d26" stroke-width="1.1"/><path d="M24 1017 L35.6 1029 L24 1041 M35.6 1017 L47.5 1029 L35.6 1041" fill="none" stroke="#1a1a1a" stroke-width="1.2"/><path d="M105.5 55.2 H107.6 M105.5 55.2 V84.5 H127.5 V82.4" fill="none" stroke="#1a1a1a" stroke-width="1.3"/><path d="M107.6 53.3 H109.7 M107.6 53.3 V82.4 H130.4 V80.2" fill="#fff" stroke="#1a1a1a" stroke-width="1.3"/><path d="M109.7 52 H125.1 L132.4 59.3 V80.2 H109.7 Z" fill="#fff" stroke="#1a1a1a" stroke-width="1.3"/><path d="M125.1 52 V59.3 H132.4" fill="none" stroke="#1a1a1a" stroke-width="1.3"/><rect x="114.3" y="62.4" width="11.8" height="6.8" fill="none" stroke="#e44d26" stroke-width="1.1"/><path d="M114.4 73.4 H126.8 M114.4 76.5 H126.8" stroke="#e44d26" stroke-width="1.1"/><path d="M555.8 43.8 H573.5 L582.4 52.4 V78.2 H555.8 Z" fill="#fff" stroke="#1a1a1a" stroke-width="1.3"/><path d="M573.5 43.8 V52.4 H582.4" fill="none" stroke="#1a1a1a" stroke-width="1.3"/><rect x="568.3" y="58.3" width="21.5" height="12.5" fill="#e44d26"/><text x="571" y="67.3" font-size="8.4" textLength="13.7" lengthAdjust="spacingAndGlyphs" fill="#fff" font-family="Liberation Sans">PDF</text><path d="M1745.8 58 V55.9 L1738.5 48.7 H1724.9 V75.6 H1745.8" fill="none" stroke="#555" stroke-width="1.2"/><path d="M1738.5 48.7 V55.9 H1745.8" fill="#e8e8e8" stroke="#555" stroke-width="1.2"/><path d="M1738.2 65.5 H1752 M1746.9 60.6 L1752 65.5 L1746.9 70.6" fill="none" stroke="#e44d26" stroke-width="1.1"/><path d="M1793.00 46.00 L1797.11 56.94 L1808.79 57.47 L1799.66 64.76 L1802.76 76.03 L1793.00 69.60 L1783.24 76.03 L1786.34 64.76 L1777.21 57.47 L1788.89 56.94 Z" fill="none" stroke="#e44d26" stroke-width="1.2" stroke-linejoin="miter"/><path d="M1813.8 98.2 H1818 L1815.9 100.8 Z" fill="#222"/><path d="M1855.5 49.5 V47.6 H1870.8 L1877.8 54.2 V74.2 H1875.3" fill="#fff" stroke="#333" stroke-width="1.1"/><path d="M1853 49.7 H1869.6 L1875.1 55.9 V76.3 H1853 Z" fill="#fff" stroke="#333" stroke-width="1.2"/><path d="M1867.6 50 L1874.9 56.7 H1867.6 Z" fill="#e44d26"/></svg>
</body></html>
